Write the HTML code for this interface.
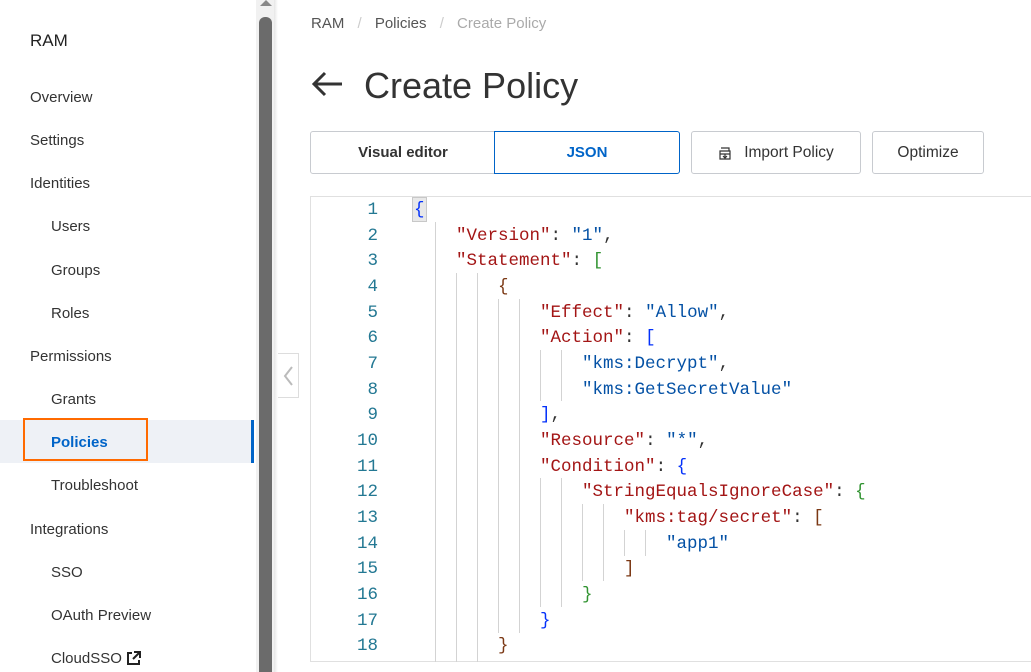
<!DOCTYPE html>
<html><head><meta charset="utf-8"><style>
*{margin:0;padding:0;box-sizing:border-box}
body{width:1031px;height:672px;overflow:hidden;background:#fff;font-family:"Liberation Sans",sans-serif;position:relative;color:#333}
.a{position:absolute;white-space:nowrap}
.nav{font-size:15px;color:#333}
.btn{position:absolute;top:131px;height:43px;border:1px solid #c8cbd0;border-radius:3px;font-size:15px;font-weight:bold;color:#333;display:flex;align-items:center;justify-content:center;background:#fff}
.code{font-family:"Liberation Mono",monospace;font-size:17.5px;position:absolute;white-space:pre;line-height:25.65px}
.ln{color:#237893;text-align:right;width:40px;left:338px}
.k{color:#a31515}.s{color:#0451a5}.p{color:#000}
.b1{color:#0431fa}.b2{color:#319331}.b3{color:#7b3814}
.g{position:absolute;width:1px;background:#d3d3d3}
</style></head><body>
<div class="a" style="left:30px;top:31px;font-size:17px;color:#222">RAM</div>
<div class="a nav" style="left:30px;top:89px">Overview</div>
<div class="a nav" style="left:30px;top:132px">Settings</div>
<div class="a nav" style="left:30px;top:175px">Identities</div>
<div class="a nav" style="left:51px;top:218px">Users</div>
<div class="a nav" style="left:51px;top:262px">Groups</div>
<div class="a nav" style="left:51px;top:305px">Roles</div>
<div class="a nav" style="left:30px;top:348px">Permissions</div>
<div class="a nav" style="left:51px;top:391px">Grants</div>
<div class="a" style="left:0;top:420px;width:254px;height:43px;background:#eef1f6"></div>
<div class="a" style="left:251px;top:420px;width:3px;height:43px;background:#0064c8"></div>
<div class="a" style="left:23px;top:418px;width:125px;height:43px;border:2px solid #ff6a00"></div>
<div class="a nav" style="left:51px;top:434px;font-weight:bold;color:#0064c8">Policies</div>
<div class="a nav" style="left:51px;top:477px">Troubleshoot</div>
<div class="a nav" style="left:30px;top:521px">Integrations</div>
<div class="a nav" style="left:51px;top:564px">SSO</div>
<div class="a nav" style="left:51px;top:607px">OAuth Preview</div>
<div class="a nav" style="left:51px;top:650px">CloudSSO</div>
<svg class="a" style="left:126px;top:651px" width="15" height="15" viewBox="0 0 15 15"><path d="M6 2H2v11h11V9" fill="none" stroke="#222" stroke-width="2"/><path d="M8 1h6v6M14 1L7 8" fill="none" stroke="#222" stroke-width="2"/></svg>
<div class="a" style="left:256px;top:0;width:18px;height:672px;background:#f1f1f1"></div>
<div class="a" style="left:259px;top:17px;width:13px;height:655px;background:#6b6b6b;border-radius:6px 6px 0 0"></div>
<div class="a" style="left:260px;top:0;width:0;height:0;border-left:6px solid transparent;border-right:6px solid transparent;border-bottom:6px solid #888"></div>
<div class="a" style="left:274px;top:0;width:4px;height:672px;background:linear-gradient(90deg,#e6e6e6,#fff)"></div>
<div class="a" style="left:278px;top:353px;width:21px;height:45px;border:1px solid #ddd;border-left:none;background:#fff"></div>
<svg class="a" style="left:281px;top:365px" width="14" height="22"><path d="M11 2L4 11l7 9" fill="none" stroke="#bbb" stroke-width="2"/></svg>
<div class="a" style="left:311px;top:15px;font-size:15px;color:#555">RAM <span style="color:#ccc;margin:0 9px">/</span> Policies <span style="color:#ccc;margin:0 9px">/</span> <span style="color:#aaa">Create Policy</span></div>
<svg class="a" style="left:310px;top:70px" width="34" height="28"><path d="M32 14H4M15 3L4 14l11 11" fill="none" stroke="#333" stroke-width="3"/></svg>
<div class="a" style="left:364px;top:65px;font-size:36px;color:#333">Create Policy</div>
<div class="btn" style="left:310px;width:186px;border-radius:3px 0 0 3px">Visual editor</div>
<div class="btn" style="left:494px;width:186px;border-color:#0064c8;color:#0064c8;border-radius:0 3px 3px 0">JSON</div>
<div class="btn" style="left:691px;width:170px;font-weight:normal;font-size:15.5px"><svg width="14" height="14" style="margin-right:12px"><path d="M2 5h10v8H2zM3 2h8v3M2 8h10M7 8v4M5 10l2 2 2-2" fill="none" stroke="#333" stroke-width="1.2"/></svg>Import Policy</div>
<div class="btn" style="left:872px;width:112px;font-weight:normal;font-size:15.5px">Optimize</div>
<div class="a" style="left:310px;top:196px;width:721px;height:466px;border:1px solid #e0e0e0;border-right:none"></div>
<div class="a" style="left:412px;top:197px;width:15px;height:25px;background:#e8e8e8;border:1px solid #c8c8c8"></div>
<div class="code ln" style="top:198px">1
2
3
4
5
6
7
8
9
10
11
12
13
14
15
16
17
18</div>
<div class="g" style="left:435px;top:222px;height:440px"></div>
<div class="g" style="left:456px;top:273px;height:389px"></div>
<div class="g" style="left:477px;top:273px;height:389px"></div>
<div class="g" style="left:498px;top:299px;height:334px"></div>
<div class="g" style="left:519px;top:299px;height:334px"></div>
<div class="g" style="left:540px;top:350px;height:51px"></div>
<div class="g" style="left:561px;top:350px;height:51px"></div>
<div class="g" style="left:540px;top:478px;height:129px"></div>
<div class="g" style="left:561px;top:478px;height:129px"></div>
<div class="g" style="left:582px;top:504px;height:77px"></div>
<div class="g" style="left:603px;top:504px;height:77px"></div>
<div class="g" style="left:624px;top:530px;height:26px"></div>
<div class="g" style="left:645px;top:530px;height:26px"></div>
<div class="code" style="left:414px;top:198px"><span class="b1">{</span>
    <span class="k">"Version"</span>: <span class="s">"1"</span>,
    <span class="k">"Statement"</span>: <span class="b2">[</span>
        <span class="b3">{</span>
            <span class="k">"Effect"</span>: <span class="s">"Allow"</span>,
            <span class="k">"Action"</span>: <span class="b1">[</span>
                <span class="s">"kms:Decrypt"</span>,
                <span class="s">"kms:GetSecretValue"</span>
            <span class="b1">]</span>,
            <span class="k">"Resource"</span>: <span class="s">"*"</span>,
            <span class="k">"Condition"</span>: <span class="b1">{</span>
                <span class="k">"StringEqualsIgnoreCase"</span>: <span class="b2">{</span>
                    <span class="k">"kms:tag/secret"</span>: <span class="b3">[</span>
                        <span class="s">"app1"</span>
                    <span class="b3">]</span>
                <span class="b2">}</span>
            <span class="b1">}</span>
        <span class="b3">}</span></div>
</body></html>
